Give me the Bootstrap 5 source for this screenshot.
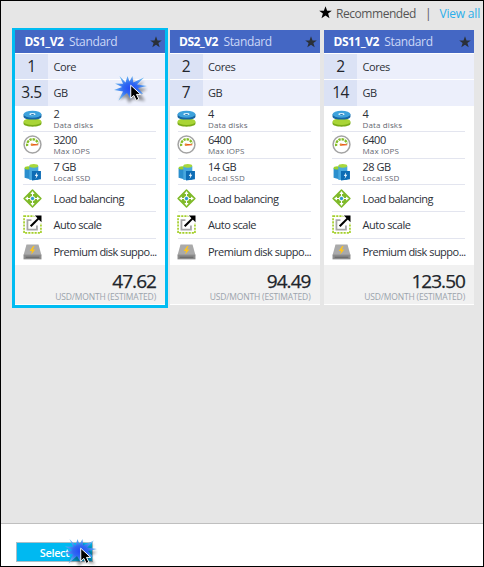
<!DOCTYPE html>
<html lang="en">
<head>
<meta charset="utf-8">
<meta name="viewport" content="width=device-width, initial-scale=1">
<title>Choose your pricing tier</title>
<link href="https://cdn.jsdelivr.net/npm/bootstrap@5.3.0/dist/css/bootstrap.min.css" rel="stylesheet">
<style>
body{font-family:"Open Sans","Noto Sans",sans-serif;font-size:11px;line-height:1;color:#2c3038;background:#e6e6e6}
.blade{height:567px;border:1px solid #000;overflow:hidden}
.defs{width:0;height:0;position:absolute}
.topline{height:27px;padding:0 3px 2px 0;font-size:12px;color:#555}
.topline .legend{letter-spacing:-.45px}
.topline svg{margin:0 4px 2px 0}
.topline a{color:#2aaeea;letter-spacing:-.2px}
.topline .rule{margin:0 8px 0 9px}
.tiers{padding-left:11px;height:496px;border-bottom:1px solid #bfbfbf}
.tier{width:150px;height:275px;margin-top:2px;background:#fff}
.tier.selected{box-sizing:content-box;border:3px solid #00bcf2;border-top-width:2px;margin-top:0}
.tier-second{margin-left:1.5px}
.tier-third{margin-left:4.5px}
.tier-head{height:22.5px;padding:1px 3px 0 9.5px;background:#4467c4;color:#cdd8f7;font-size:12px;letter-spacing:-.35px}
.tier-head strong{color:#fff;letter-spacing:-.5px;margin-right:5.5px}
.spec{height:25.5px;margin-top:1px;background:#eceffb}
.spec b{width:33px;height:100%;background:#dbe2f5;font-size:15.5px;font-weight:400;letter-spacing:-.5px;color:#22252c}
.spec span{padding-left:5.5px;letter-spacing:-.4px}
.feature{height:26.67px;margin:0 9px 0 8px;border-bottom:1px solid #e3e5ef;letter-spacing:-.48px;white-space:nowrap}
.feature.last{border:0;letter-spacing:-.52px}
.feature.last div{padding-bottom:2px}
.feature>svg{width:19px;height:19px;margin:0 12px 0 -.5px;flex:none}
.feature small{display:block;font-size:8px;line-height:9px;color:#656872;letter-spacing:.12px;margin-top:1px}
.price{height:39px;padding:6px 9px 0 0;background:#f1f1f1;color:#20242a}
.price strong{font-size:19px;line-height:20px;font-weight:400;letter-spacing:-.95px;-webkit-text-stroke:.25px #20242a}
.price span{font-size:8.5px;line-height:10px;color:#9ba3ac;letter-spacing:-.15px;margin-top:.5px}
.commands{height:44px;padding:18px 0 0 15px}
.btn-choose{width:77px;height:20px;padding:0;font-size:11px;line-height:19px;border:1px solid #a9bfc8;border-radius:0;background:#00b9f1;color:#fff;font-weight:600;letter-spacing:-.35px}
.btn-choose:hover{background:#00b9f1;color:#fff}
.burst{position:absolute;width:38px;height:32px;overflow:visible}
.burst-card{left:109px;top:72px}
.burst-btn{left:59px;top:535px}
</style>
</head>
<body>
<svg class="defs">
<defs>
<radialGradient id="blueburst"><stop offset="0" stop-color="#2448f5"/><stop offset=".45" stop-color="#3069f2"/><stop offset="1" stop-color="#69b6f0"/></radialGradient>
<filter id="soft" x="-50%" y="-50%" width="200%" height="200%"><feGaussianBlur stdDeviation="1.5"/></filter>
</defs>
<symbol id="star" viewBox="0 0 12 12"><path d="M6 .3 7.5 4.4h4.3L8.4 7l1.3 4.3L6 8.7l-3.7 2.6L3.6 7 .2 4.4h4.3z"/></symbol>
<symbol id="disks" viewBox="0 0 18 18"><path fill="#7aab19" d="M.5 12v1.8c0 4 17 4 17 0V12z"/><ellipse cx="9" cy="12" rx="8.5" ry="3.2" fill="#a9d536"/><path fill="#1565a4" d="M.5 5v2c0 4 17 4 17 0V5z"/><ellipse cx="9" cy="5" rx="8.5" ry="3.3" fill="#3da2dc"/><ellipse cx="9" cy="4.9" rx="3" ry="1.1" fill="#d8f0fb"/><ellipse cx="9" cy="5.2" rx="1.5" ry=".5" fill="#2474ae"/></symbol>
<symbol id="gauge" viewBox="0 0 18 18"><circle cx="9" cy="9" r="8" fill="#fff" stroke="#a3a3a3" stroke-width="1.4"/><path d="M4 10.5A5.2 5.2 0 0 1 14.2 8" fill="none" stroke="#85bd28" stroke-width="2.2" stroke-dasharray="2.3 .8"/><path d="m7.8 8.3 6.7.4v1.1l-6.7.3z" fill="#e65a1c"/><circle cx="8.3" cy="9.2" r="1.1" fill="#e88b31"/></symbol>
<symbol id="ssd" viewBox="0 0 18 18"><path fill="#2b8fce" d="M1.5 5.8h6v10.7l-6-1.5z"/><ellipse cx="4.8" cy="5.6" rx="3.3" ry="1.6" fill="#9bd12b"/><path fill="#48a8de" d="M6 3.8h8.5V17H6z"/><ellipse cx="10.2" cy="3.6" rx="4.2" ry="1.8" fill="#a8d83c"/><path fill="#0d6cb5" d="M8.5 8.5H17v7.8L8.5 17.5z"/><path fill="#ecf8ff" d="m13.4 9.7-2.2 3.6h1.4l-.7 2.7 2.6-3.9H13z"/></symbol>
<symbol id="balance" viewBox="0 0 18 18"><path fill="#7fba29" stroke="#7fba29" stroke-width="1.4" stroke-linejoin="round" d="m9 1 8 8-8 8-8-8z"/><path stroke="#fff" stroke-width="1" d="M9 4v10M4 9h10"/><path fill="#fff" d="M9 2 11 4.7H7zM9 16 7 13.3h4zM2 9l2.7-2v4zM16 9l-2.7 2V7z"/><circle cx="9" cy="9" r="2.4" fill="#fff"/><circle cx="9" cy="9" r="1.6" fill="#3499cd"/></symbol>
<symbol id="scale" viewBox="0 0 18 18"><path fill="none" stroke="#a4cf2b" stroke-width="1.6" stroke-dasharray="2 1" d="M1 1h16v16H1z"/><path fill="none" stroke="#a7a7a7" stroke-width="1.7" d="M8 4.8H4.2v9h9V10"/><path fill="#fff" d="M10 0h8v8h-3z"/><path stroke="#000" stroke-width="2" d="m7.3 10.7 7.5-7.5"/><path d="M11.2.5h6.3v6.3z"/></symbol>
<symbol id="premium" viewBox="0 0 18 18"><path fill="#aaa" d="M3.3 1.5h11.4L17.5 11.5H.5z"/><path fill="#8b8b8b" d="M.5 11h17v4.5H.5z"/><path fill="#666" d="M2.5 13h13v1h-13z"/><path fill="#ffc51c" d="M9.7 2.8 6.3 7.5h2.2l-.8 3.5 4-4.8H9.3l1.6-3.4z"/></symbol>
<symbol id="click" viewBox="0 0 38 32"><path transform="translate(4 5)" filter="url(#soft)" opacity=".4" d="m19 1 2 7 9-5-5 7 8 1-7 4 5 8-12-2-4 4-3-6-7 3 5-7z"/><path fill="url(#blueburst)" d="m9.500 3 6 6.500L17.500 3l2 5.500L22.500 3l.7 6.500L34 4.500l-7 7L37 13l-9 2 5 6-9.500-2-3 7-3.500-6-8.500 7.500L13 18.500 4 17l8-3-7-3.500 8 .3z"/><path fill="#000" stroke="#fff" stroke-width="1" d="m20.700 12.200.1 13 3-2.800 2.400 5 2.700-1.200-2.400-4.800h4.200z"/></symbol>
</svg>
<main class="blade position-relative">
  <div class="topline d-flex justify-content-end align-items-center">
    <svg width="13" height="13" fill="#000"><use href="#star"/></svg><span class="legend">Recommended</span><span class="rule">|</span><a href="#" class="text-decoration-none">View all</a>
  </div>
  <section class="tiers d-flex align-items-start" id="tiers"></section>
  <div class="commands bg-white"><button class="btn btn-choose d-block">Select</button></div>
  <svg class="burst burst-card"><use href="#click"/></svg>
  <svg class="burst burst-btn"><use href="#click"/></svg>
</main>
<script>
const tiers=[
 {name:'DS1_V2',cores:1,unit:'Core',ram:'3.5',disks:2,iops:3200,ssd:'7 GB',price:'47.62',cls:'selected'},
 {name:'DS2_V2',cores:2,unit:'Cores',ram:'7',disks:4,iops:6400,ssd:'14 GB',price:'94.49',cls:'tier-second'},
 {name:'DS11_V2',cores:2,unit:'Cores',ram:'14',disks:4,iops:6400,ssd:'28 GB',price:'123.50',cls:'tier-third'}];
const feature=(icon,text,sub)=>`<div class="feature d-flex align-items-center ${icon==='premium'?'last':''}"><svg><use href="#${icon}"/></svg><div>${text}${sub?`<small>${sub}</small>`:''}</div></div>`;
const spec=(n,unit)=>`<div class="spec d-flex align-items-center"><b class="d-flex align-items-center justify-content-center">${n}</b><span>${unit}</span></div>`;
document.getElementById('tiers').innerHTML=tiers.map(t=>`
<article class="tier flex-shrink-0 ${t.cls}">
 <div class="tier-head d-flex align-items-center"><strong>${t.name}</strong><span>Standard</span><svg width="12" height="12" class="ms-auto" fill="#2a3038"><use href="#star"/></svg></div>
 ${spec(t.cores,t.unit)}${spec(t.ram,'GB')}
 ${feature('disks',t.disks,'Data disks')}${feature('gauge',t.iops,'Max IOPS')}${feature('ssd',t.ssd,'Local SSD')}${feature('balance','Load balancing')}${feature('scale','Auto scale')}${feature('premium','Premium disk suppo...')}
 <div class="price d-flex flex-column align-items-end"><strong>${t.price}</strong><span>USD/MONTH (ESTIMATED)</span></div>
</article>`).join('');
</script>
<script src="https://cdn.jsdelivr.net/npm/bootstrap@5.3.0/dist/js/bootstrap.bundle.min.js"></script>
</body>
</html>
